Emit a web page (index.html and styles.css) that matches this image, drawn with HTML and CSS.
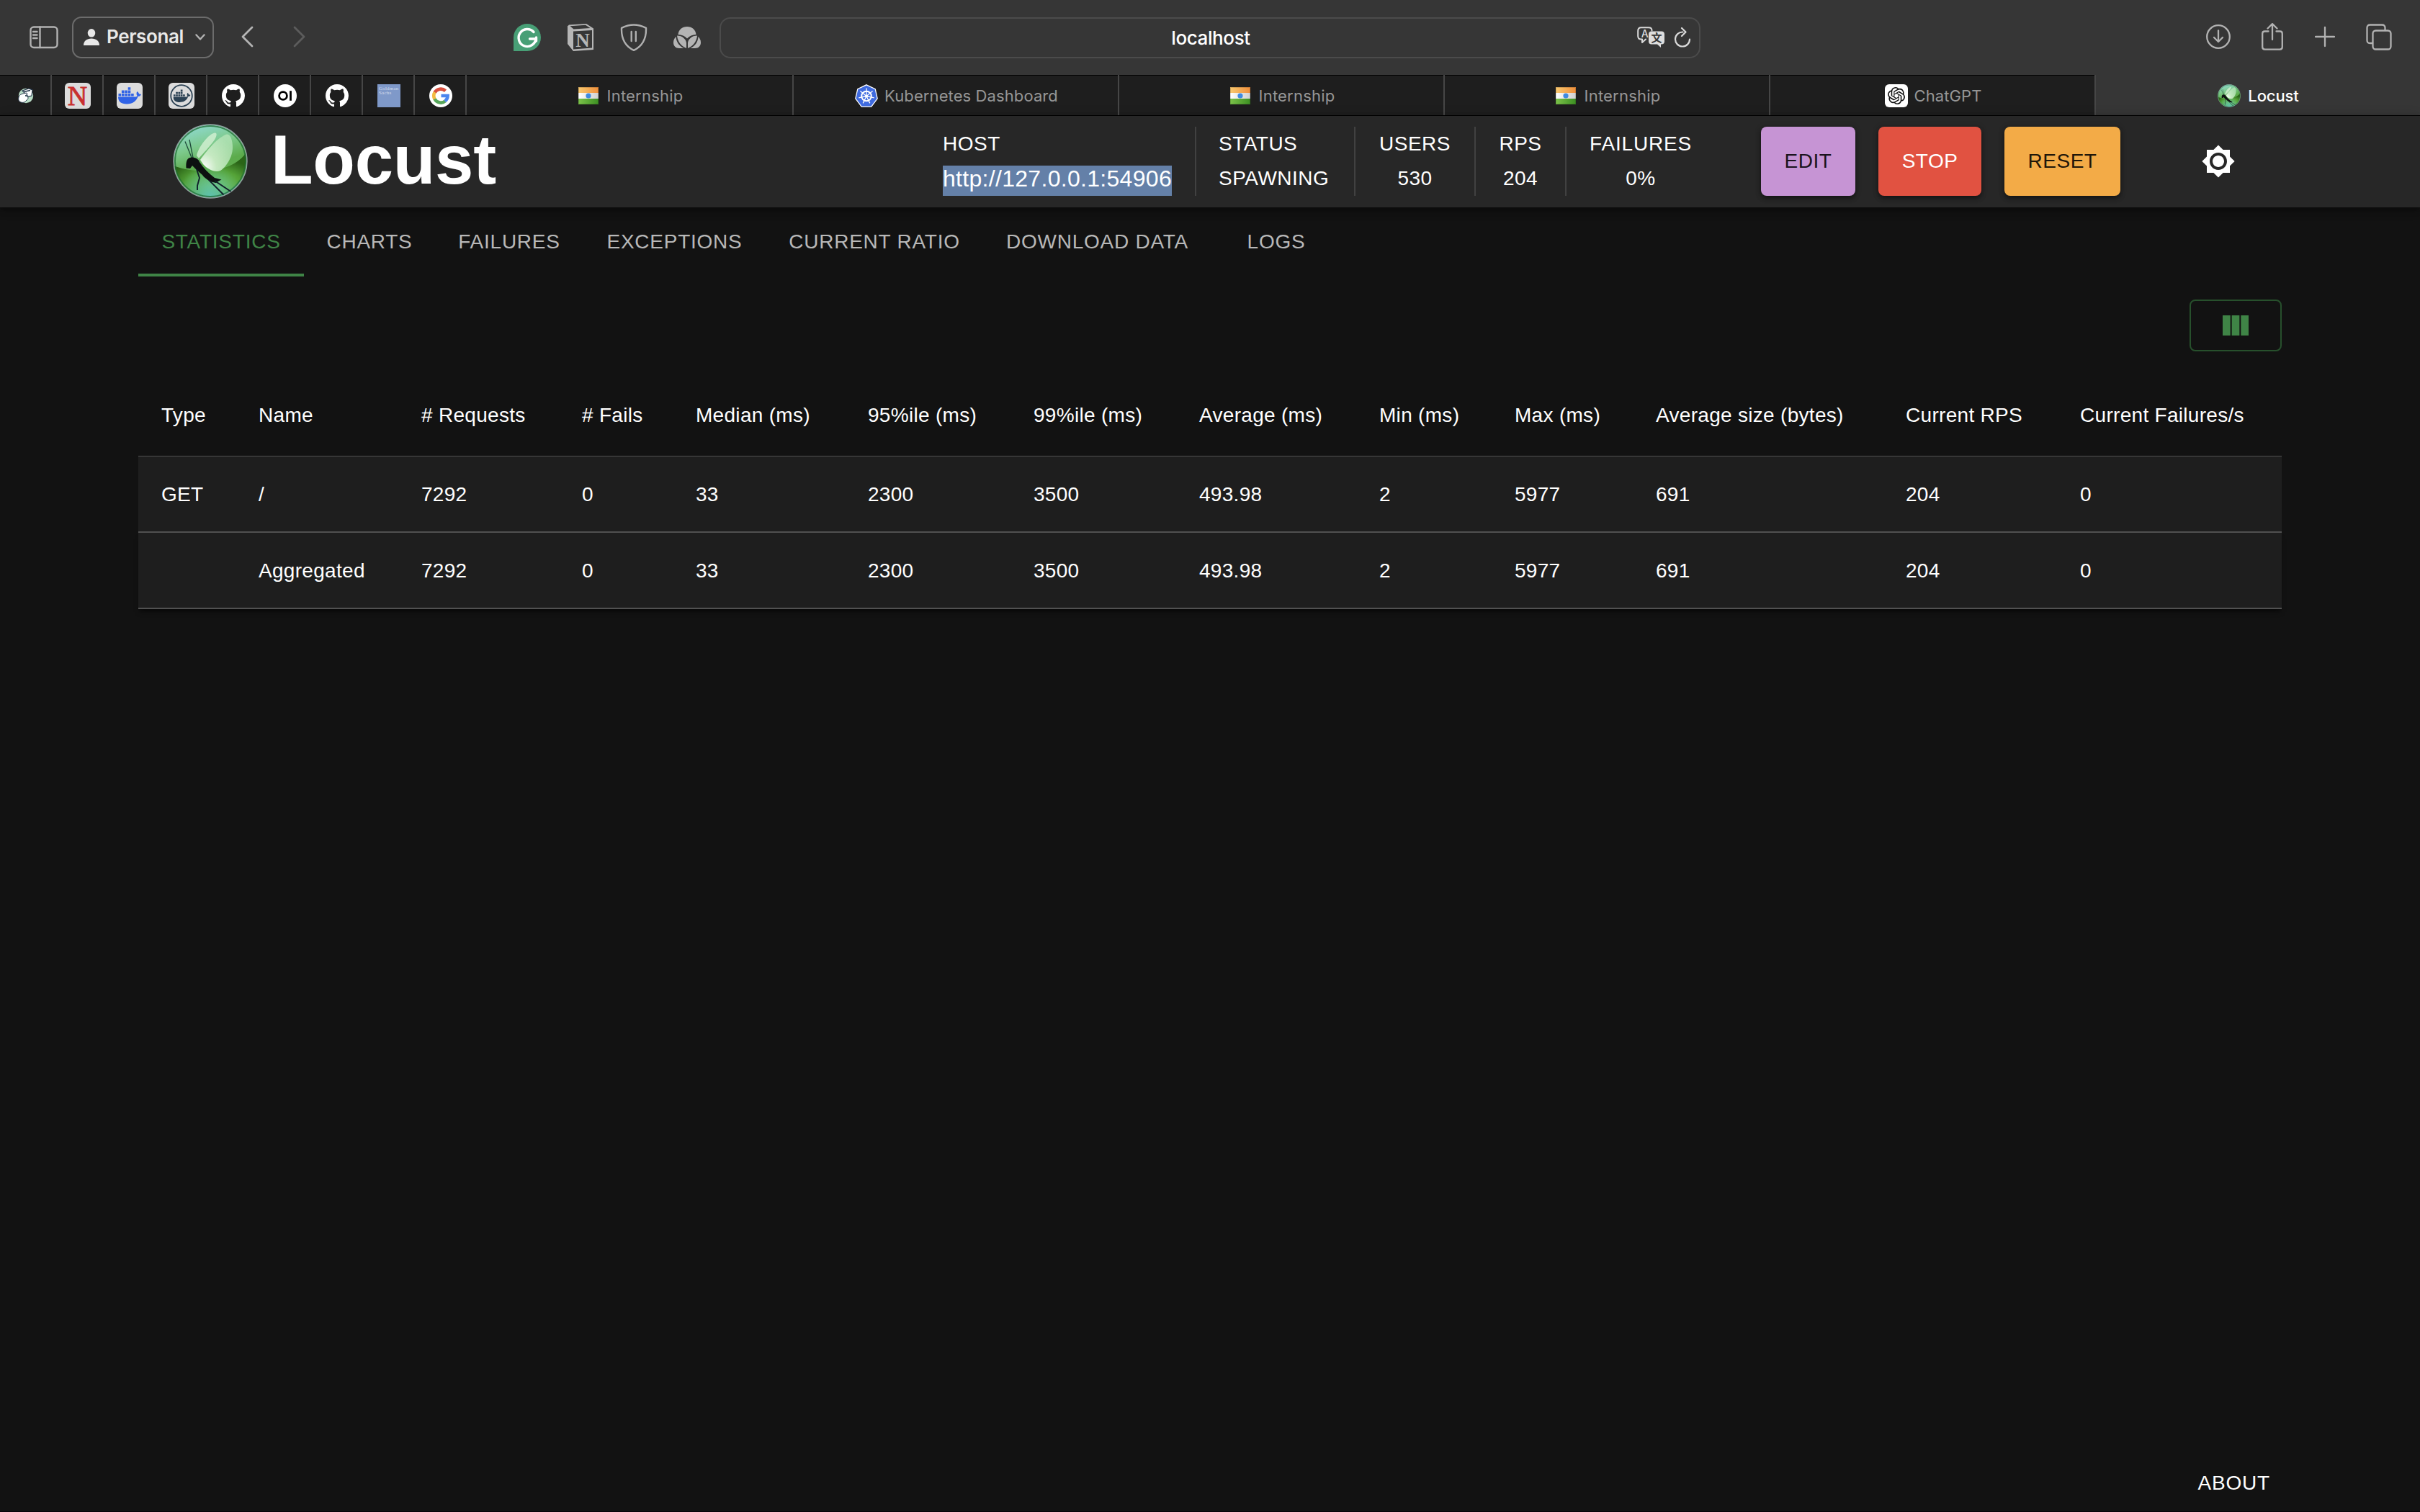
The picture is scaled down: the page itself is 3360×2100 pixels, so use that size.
FILE: index.html
```html
<!DOCTYPE html>
<html lang="en">
<head>
<meta charset="utf-8">
<title>Locust</title>
<link rel="stylesheet" href="styles.css">
</head>
<body>
<svg class="sprite" width="0" height="0" aria-hidden="true">
  <defs>
    <linearGradient id="orb" x1="0.3" y1="0" x2="0.6" y2="1">
      <stop offset="0" stop-color="#8fd9d0"/><stop offset=".3" stop-color="#7cc98a"/><stop offset=".55" stop-color="#5cab4c"/><stop offset=".8" stop-color="#5fb04f"/><stop offset="1" stop-color="#5cb79a"/>
    </linearGradient>
    <radialGradient id="shade" cx=".55" cy=".78" r=".66">
      <stop offset="0" stop-color="#7cc75c"/><stop offset=".6" stop-color="#54a237"/><stop offset="1" stop-color="#2a6417"/>
    </radialGradient>
    <radialGradient id="teal" cx=".5" cy="1" r=".45">
      <stop offset="0" stop-color="#5ec2b0"/><stop offset="1" stop-color="#5ec2b0" stop-opacity="0"/>
    </radialGradient>
    <radialGradient id="wing" cx=".1" cy=".9" r="1">
      <stop offset="0" stop-color="#fff"/><stop offset=".4" stop-color="#d0efcc" stop-opacity=".9"/><stop offset="1" stop-color="#b5e4b8" stop-opacity=".8"/>
    </radialGradient>
    <linearGradient id="saffron"><stop offset="0" stop-color="#f9c970"/><stop offset="1" stop-color="#ef8f3c"/></linearGradient>
    <linearGradient id="leaf"><stop offset="0" stop-color="#7cc24a"/><stop offset="1" stop-color="#3c8f22"/></linearGradient>
    <linearGradient id="pale"><stop offset="0" stop-color="#fff"/><stop offset="1" stop-color="#cfcfcf"/></linearGradient>
    <symbol id="locust" viewBox="0 0 104 104">
      <circle cx="52" cy="52" r="51" fill="url(#orb)"/>
      <path d="M2.5 58.7C30 69 80 70 101 41A50 50 0 1 1 2.5 58.7z" fill="url(#shade)"/>
      <circle cx="52" cy="52" r="50" fill="url(#teal)"/>
      <circle cx="52" cy="52" r="49" fill="none" stroke="#1f6b34" stroke-opacity=".75" stroke-width="1.8"/>
      <circle cx="52" cy="52" r="51" fill="none" stroke="#8fa3a0" stroke-width="1.4"/>
      <path d="M33 44C36 31 50 14 58 12.500C62 12 61 17 58 22C51 32 42 41 36 48z" fill="#d0efd0" fill-opacity=".85"/>
      <path d="M38 50C48 36 63 18 75 14.500C80 14 83 23 83 33C83 46 74 60 66 65C58 68 48 63 42 56z" fill="url(#wing)"/>
      <path d="M17 24.500L26.500 48M23 22L28 47" stroke="#1e4a3a" stroke-width="1.300" fill="none"/>
      <path d="M18.500 61.500C18 53 19 47 26 46.500C31 46.500 36 49 37 53C43 62 50 69 58 75L67.500 77.500L62.500 80L60 82C53 81 45 77 41 71L32 63L27 58L24 62z" fill="#0d1110"/>
      <path d="M33 63L37 75L34 86V92M50 78L70.500 98.500M58 79L80.500 94" stroke="#10202a" stroke-width="1.900" fill="none"/>
    </symbol>
    <symbol id="github" viewBox="0 0 16 16"><path fill="#fff" d="M8 0C3.580 0 0 3.580 0 8c0 3.540 2.290 6.530 5.470 7.590.4.070.55-.17.55-.38 0-.19-.01-.82-.01-1.490-2.010.37-2.530-.49-2.690-.94-.09-.23-.48-.94-.82-1.130-.28-.15-.68-.52-.01-.53.63-.01 1.080.58 1.230.82.72 1.210 1.870.87 2.330.66.070-.52.28-.87.51-1.070-1.780-.2-3.640-.89-3.640-3.950 0-.87.31-1.590.82-2.150-.08-.2-.36-1.020.080-2.120 0 0 .67-.21 2.200.82.64-.18 1.320-.27 2-.27s1.360.090 2 .27c1.530-1.040 2.200-.82 2.200-.82.44 1.100.16 1.920.080 2.120.51.56.82 1.270.82 2.150 0 3.070-1.870 3.750-3.650 3.950.29.25.54.73.54 1.480 0 1.070-.01 1.930-.01 2.200 0 .21.15.46.55.38A8.010 8.010 0 0 0 16 8c0-4.420-3.580-8-8-8z"/></symbol>
    <symbol id="flag" viewBox="0 0 32 32">
      <path fill="url(#saffron)" d="M2 4h28v8H2z"/><path fill="url(#pale)" d="M2 12h28v8H2z"/><path fill="url(#leaf)" d="M2 20h28v8H2z"/>
      <circle cx="16" cy="16" r="3.600" fill="#3f8ae0"/>
      <path d="M2.500 4.500h27v23h-27z" fill="none" stroke="#000" stroke-opacity=".16"/>
    </symbol>
    <symbol id="whale" viewBox="0 0 32 24">
      <path d="M0 14h24.500c1.200-.3 1.800-.8 2-1.500-1.400-2-1.200-4.300 0-6 1.600 1 2.300 2.200 2.500 3.500 1.200-.2 2.200 0 3 .5-.8 2-2.200 2.800-4.300 2.800C25 20.500 20 24 12 24 4 24 0 20.500 0 14z"/>
      <path d="M.5 9.500h3.600v3.600H.5zM4.900 9.500h3.600v3.600H4.900zM9.300 9.500h3.600v3.600H9.300zM13.700 9.500h3.600v3.600h-3.600zM18.100 9.500h3.600v3.600h-3.600zM4.900 5.100h3.600v3.600H4.900zM9.300 5.100h3.600v3.600H9.300zM13.700 5.100h3.600v3.600h-3.600zM13.700.7h3.600v3.600h-3.600z"/>
    </symbol>
  </defs>
</svg>

<header class="toolbar">
  <div class="tools-left">
    <svg class="ic-side" viewBox="0 0 40 32"><rect x="1.500" y="1.500" width="37" height="28.500" rx="4.500"/><path d="M14.500 1.500V30M5 8h5.500M5 12.500h5.500M5 17h5.500"/></svg>
    <button class="profile">
      <svg class="ic-person" viewBox="0 0 22 23"><ellipse cx="11" cy="5.800" rx="5.300" ry="5.800"/><path d="M0 23c0-6 4.500-9.500 11-9.500S22 17 22 23z"/></svg>
      <span>Personal</span>
      <svg class="ic-down" viewBox="0 0 14 9"><path d="M1.500 1.500L7 7.500l5.500-6"/></svg>
    </button>
    <svg class="ic-back" viewBox="0 0 17 30"><path d="M15 2L2 15l13 13"/></svg>
    <svg class="ic-fwd" viewBox="0 0 17 30"><path d="M2 2l13 13L2 28"/></svg>
  </div>
  <div class="extensions">
    <svg viewBox="0 0 38 38"><path fill="#489f76" d="M19 0a19 19 0 1 1 0 38H0V19A19 19 0 0 1 19 0z"/><path d="M28 11.500A12 12 0 1 0 31 21H22.500M31.500 19v5" fill="none" stroke="#fff" stroke-width="3.400" stroke-linecap="round"/></svg>
    <svg viewBox="0 0 38 38"><path fill="#b6b6b6" d="M3 1.500L27 0l10 6.500V36L9 38 1 28V3.500z"/><path fill="#363636" d="M4.500 3.200L26 1.800l6.500 4.300L9.500 7.500zM9 10.500L35 9v24.500L9 35.500z"/><text x="22" y="32" text-anchor="middle" class="notion">N</text></svg>
    <svg viewBox="0 0 38 38"><path d="M19 1.500c6 0 11.500 1.700 17 4.300.5 14-4.500 25-17 31C6.500 31 1.500 20 2 5.800 7.500 3.200 13 1.500 19 1.500zM15.700 11v13M21.800 11v13" fill="none" stroke="#b0b0b0" stroke-width="2.400" stroke-linecap="round"/></svg>
    <svg viewBox="0 0 38 38"><g fill="#b4b4b4"><path d="M6.500 15C7 8.500 12 4 19 4s12 4.500 12.500 11c-5 .2-9.500 2-12.500 5.500C16 17 11.500 15.200 6.500 15z"/><path d="M5 16.500c7.500 0 12.500 5 13 10v7.500C11 31 6 25.500 5 16.500zM33 16.500c-7.500 0-12.500 5-13 10v7.500c7-3 12-8.500 13-17.500z"/><path d="M3.500 18C4 25.500 8 31 14.500 34H8C3 34 0 30.500 0 26c0-3.500 1.500-6 3.500-8zM34.500 18c-.5 7.500-4.500 13-11 16H30c5 0 8-3.500 8-8 0-3.500-1.500-6-3.500-8z"/></g></svg>
  </div>
  <div class="urlbar">
    <span class="url">localhost</span>
    <svg class="ic-translate" viewBox="0 0 38 30"><path d="M12 17.500L7 22v-4.500H5.500C3 17.500 1.200 16 1.200 13V6C1.200 3 3 1.200 5.500 1.200h10.500C18.800 1.200 20.500 3 20.500 5.500" fill="none" stroke="#dadada" stroke-width="2"/><text x="10.800" y="14.500" text-anchor="middle" class="tr-a">A</text><path fill="#dedede" d="M20 6.500h14c2.500 0 4 1.500 4 4v10c0 2.500-1.500 4-4 4h-1V29l-5-4.500h-8c-2.500 0-4-1.500-4-4v-10c0-2.500 1.500-4 4-4z"/><text x="27" y="21" text-anchor="middle" class="tr-b">文</text></svg>
    <svg class="ic-reload" viewBox="0 0 24 28"><path d="M12.500 6.500A10 10 0 1 0 22 16.500M11 1l5.500 5.500L11 12" fill="none" stroke="#dadada" stroke-width="2.200" stroke-linecap="round" stroke-linejoin="round"/></svg>
  </div>
  <div class="tools-right">
    <svg viewBox="0 0 34 38"><circle cx="17" cy="19" r="15.800"/><path d="M17 10.500v15M11 20l6 6 6-6"/></svg>
    <svg viewBox="0 0 30 38"><path d="M9.500 11.500H4.500c-2 0-3.300 1.300-3.300 3.300v18.500c0 2 1.300 3.300 3.300 3.300h21c2 0 3.300-1.300 3.300-3.300V14.800c0-2-1.300-3.300-3.300-3.300h-5M15 23V1.500M8.500 7.500L15 1.200l6.500 6.300"/></svg>
    <svg viewBox="0 0 28 38"><path d="M14 6v26M1 19h26"/></svg>
    <svg viewBox="0 0 36 38"><rect x="9.500" y="10.500" width="25" height="26" rx="4"/><path d="M26.500 10V6.500c0-2.500-1.500-4-4-4h-17c-2.500 0-4 1.500-4 4v17.500c0 2.500 1.500 4 4 4H9"/></svg>
  </div>
</header>

<nav class="tabstrip">
  <div class="tab"><svg width="22" height="22" viewBox="0 0 22 22"><circle cx="11" cy="11" r="10.200" fill="#b9dcc6"/><path d="M6 4l9-3 5 2-1 8-5 1z" fill="#fff" stroke="#24364a" stroke-width="1.200"/><path d="M1 13c1-4 5-5 11-6l1 2-3 2c5 1 5 4 2 6-2 3-5 4-8 3s-4-4-3-7z" fill="#fff" stroke="#24364a" stroke-width="1"/><path d="M8 5.500l9-2" stroke="#24364a" stroke-width="1.500"/></svg></div>
  <div class="tab"><span class="fav-box">N</span></div>
  <div class="tab"><svg width="36" height="36" viewBox="0 0 36 36"><rect width="36" height="36" rx="6" fill="#dcdcdc"/><use href="#whale" x="2" y="4.500" width="32" height="26" fill="#3063e6"/></svg></div>
  <div class="tab"><svg width="36" height="36" viewBox="0 0 36 36"><rect width="36" height="36" rx="6" fill="#dcdcdc"/><circle cx="18" cy="18" r="14.800" fill="none" stroke="#2c4254" stroke-width="1.800"/><use href="#whale" x="6.500" y="9" width="24" height="18" fill="#2c4254"/></svg></div>
  <div class="tab"><svg width="32" height="32"><use href="#github"/></svg></div>
  <div class="tab"><svg width="32" height="32" viewBox="0 0 32 32"><circle cx="16" cy="16" r="16" fill="#fff"/><circle cx="13" cy="16" r="5.400" fill="none" stroke="#000" stroke-width="2.800"/><path d="M23.500 9.200v13.600" stroke="#000" stroke-width="2.800"/></svg></div>
  <div class="tab"><svg width="32" height="32"><use href="#github"/></svg></div>
  <div class="tab"><svg width="32" height="32" viewBox="0 0 32 32"><rect width="32" height="32" fill="#7f99c9"/><text x="2" y="7.500" class="fav-gs">Goldman</text><text x="2" y="14" class="fav-gs">Sachs</text></svg></div>
  <div class="tab"><svg width="32" height="32" viewBox="0 0 32 32"><circle cx="16" cy="16" r="16" fill="#fff"/><g fill="none" stroke-width="4.600"><path d="M22.500 9.200A9.700 9.700 0 0 0 7.500 11.500" stroke="#d9503f"/><path d="M7.600 11.200a9.700 9.700 0 0 0 0 9.600" stroke="#f3bb42"/><path d="M7.500 20.500a9.700 9.700 0 0 0 14.500 3" stroke="#57a65b"/><path d="M21.800 23.500A9.700 9.700 0 0 0 25.600 16H16.500" stroke="#4c86ee"/></g></svg></div>
  <div class="tab"><svg width="32" height="32"><use href="#flag"/></svg><span>Internship</span></div>
  <div class="tab wide"><svg width="32" height="32" viewBox="0 0 32 32"><path d="M16 .8l12.200 5.900 3 13.200-8.400 11.300H9.200L.8 19.900l3-13.200z" fill="#3f6be0" stroke="#fff" stroke-width="1.300"/><g fill="none" stroke="#fff"><circle cx="16" cy="16.500" r="6.800" stroke-width="2"/><path stroke-width="1.300" d="M16 5.500v11M24.600 9.600L16 16.500M26.700 18.900L16 16.500M20.800 26.400L16 16.500M11.200 26.400L16 16.500M5.300 18.900L16 16.500M7.400 9.600L16 16.500"/></g><circle cx="16" cy="16.500" r="1.800" fill="#fff"/></svg><span>Kubernetes Dashboard</span></div>
  <div class="tab"><svg width="32" height="32"><use href="#flag"/></svg><span>Internship</span></div>
  <div class="tab"><svg width="32" height="32"><use href="#flag"/></svg><span>Internship</span></div>
  <div class="tab wide"><svg width="32" height="32" viewBox="0 0 32 32"><rect width="32" height="32" rx="6" fill="#fff"/><path transform="translate(4 4)" fill="#111" d="M22.2819 9.8211a5.9847 5.9847 0 0 0-.5157-4.9108 6.0462 6.0462 0 0 0-6.5098-2.9A6.0651 6.0651 0 0 0 4.9807 4.1818a5.9847 5.9847 0 0 0-3.9977 2.9 6.0462 6.0462 0 0 0 .7427 7.0966 5.98 5.98 0 0 0 .511 4.9107 6.051 6.051 0 0 0 6.5146 2.9001A5.9847 5.9847 0 0 0 13.2599 24a6.0557 6.0557 0 0 0 5.7718-4.2058 5.9894 5.9894 0 0 0 3.9977-2.9001 6.0557 6.0557 0 0 0-.7475-7.0729zm-9.022 12.6081a4.4755 4.4755 0 0 1-2.8764-1.0408l.1419-.0804 4.7783-2.7582a.7948.7948 0 0 0 .3927-.6813v-6.7369l2.02 1.1686a.071.071 0 0 1 .038.052v5.5826a4.504 4.504 0 0 1-4.4945 4.4944zm-9.6607-4.1254a4.4708 4.4708 0 0 1-.5346-3.0137l.142.0852 4.783 2.7582a.7712.7712 0 0 0 .7806 0l5.8428-3.3685v2.3324a.0804.0804 0 0 1-.0332.0615L9.74 19.9502a4.4992 4.4992 0 0 1-6.1408-1.6464zM2.3408 7.8956a4.485 4.485 0 0 1 2.3655-1.9728V11.6a.7664.7664 0 0 0 .3879.6765l5.8144 3.3543-2.0201 1.1685a.0757.0757 0 0 1-.071 0l-4.8303-2.7865A4.504 4.504 0 0 1 2.3408 7.872zm16.5963 3.8558L13.1038 8.364 15.1192 7.2a.0757.0757 0 0 1 .071 0l4.8303 2.7913a4.4944 4.4944 0 0 1-.6765 8.1042v-5.6772a.79.79 0 0 0-.407-.667zm2.0107-3.0231l-.142-.0852-4.7735-2.7818a.7759.7759 0 0 0-.7854 0L9.409 9.2297V6.8974a.0662.0662 0 0 1 .0284-.0615l4.8303-2.7866a4.4992 4.4992 0 0 1 6.6802 4.66zM8.3065 12.863l-2.02-1.1638a.0804.0804 0 0 1-.038-.0567V6.0742a4.4992 4.4992 0 0 1 7.3757-3.4537l-.142.0805L8.704 5.459a.7948.7948 0 0 0-.3927.6813zm1.0976-2.3654l2.602-1.4998 2.6069 1.4998v2.9994l-2.5974 1.4997-2.6067-1.4997Z"/></svg><span>ChatGPT</span></div>
  <div class="tab active"><svg width="32" height="32"><use href="#locust"/></svg><span>Locust</span></div>
</nav>

<div class="appbar">
  <div class="brand"><svg width="104" height="104"><use href="#locust"/></svg><h1>Locust</h1></div>
  <div class="stats">
    <div class="stat host"><span>HOST</span><span class="link"><mark>http://127.0.0.1:54906</mark></span></div>
    <div class="stat status"><span>STATUS</span><span>SPAWNING</span></div>
    <div class="stat users"><span>USERS</span><span>530</span></div>
    <div class="stat rps"><span>RPS</span><span>204</span></div>
    <div class="stat fails"><span>FAILURES</span><span>0%</span></div>
  </div>
  <div class="actions">
    <button class="btn edit">EDIT</button>
    <button class="btn stop">STOP</button>
    <button class="btn reset">RESET</button>
  </div>
  <svg class="theme" viewBox="0 0 24 24"><path d="M20 8.690V4h-4.690L12 .69 8.690 4H4v4.690L.69 12 4 15.310V20h4.690L12 23.310 15.310 20H20v-4.690L23.310 12 20 8.690zM12 18c-3.310 0-6-2.690-6-6s2.690-6 6-6 6 2.690 6 6-2.690 6-6 6zm0-10c-2.210 0-4 1.790-4 4s1.790 4 4 4 4-1.790 4-4-1.790-4-4-4z"/></svg>
</div>

<main>
  <div class="tabs">
    <a class="selected">STATISTICS</a><a>CHARTS</a><a>FAILURES</a><a>EXCEPTIONS</a><a>CURRENT RATIO</a><a>DOWNLOAD DATA</a><a>LOGS</a>
  </div>
  <div class="table-tools">
    <button class="columns"><svg width="48" height="48" viewBox="0 0 24 24"><path d="M14.670 5v14H9.330V5h5.340zm1 14H21V5h-5.330v14zm-7.340 0V5H3v14h5.330z"/></svg></button>
  </div>
  <div class="table">
    <div class="row head"><span>Type</span><span>Name</span><span># Requests</span><span># Fails</span><span>Median (ms)</span><span>95%ile (ms)</span><span>99%ile (ms)</span><span>Average (ms)</span><span>Min (ms)</span><span>Max (ms)</span><span>Average size (bytes)</span><span>Current RPS</span><span>Current Failures/s</span></div>
    <div class="row"><span>GET</span><span>/</span><span>7292</span><span>0</span><span>33</span><span>2300</span><span>3500</span><span>493.98</span><span>2</span><span>5977</span><span>691</span><span>204</span><span>0</span></div>
    <div class="row"><span></span><span>Aggregated</span><span>7292</span><span>0</span><span>33</span><span>2300</span><span>3500</span><span>493.98</span><span>2</span><span>5977</span><span>691</span><span>204</span><span>0</span></div>
  </div>
</main>
<footer><a>ABOUT</a></footer>
</body>
</html>
```
FILE: styles.css
```css
* { box-sizing: border-box; }
body {
  margin: 0;
  height: 2100px;
  display: flex;
  flex-direction: column;
  background: #121212;
  color: #fff;
  font-family: "Liberation Sans", Arial, sans-serif;
  font-size: 28px;
  line-height: 32px;
  overflow: hidden;
}
button { border: 0; padding: 0; margin: 0; background: none; font: inherit; color: inherit; }
svg { display: block; flex: none; }
.sprite { position: absolute; }

/* Browser toolbar */
.toolbar {
  height: 104px;
  flex: none;
  background: #363636;
  display: grid;
  grid-template-columns: 713px 286px 1362px 1fr;
  font-family: Inter, sans-serif;
}
.toolbar svg { fill: none; stroke-linecap: round; stroke-linejoin: round; }
.tools-left { display: flex; align-items: center; padding-left: 41px; }
.ic-side { width: 40px; height: 32px; stroke: #b2b2b2; stroke-width: 2.4; }
.profile {
  width: 197px;
  height: 58px;
  margin-left: 19px;
  border: 2px solid #6c6c6c;
  border-radius: 13px;
  display: flex;
  align-items: center;
  padding: 0 10px 2px 14px;
  font-size: 26px;
  font-weight: 600;
  letter-spacing: -0.4px;
  color: #e8e8e8;
}
.toolbar .ic-person { width: 22px; height: 29px; fill: #e8e8e8; margin-right: 10px; }
.ic-down { width: 14px; height: 9px; stroke: #b2b2b2; stroke-width: 2.4; margin-left: auto; }
.ic-back { width: 17px; height: 30px; margin-left: 38px; margin-top: -2px; stroke: #b4b4b4; stroke-width: 2.8; }
.ic-fwd { width: 17px; height: 30px; margin-left: 55px; margin-top: -2px; stroke: #5c5c5c; stroke-width: 2.8; }
.extensions { display: flex; gap: 36px; align-items: center; }
.extensions svg { width: 38px; height: 38px; }
.extensions .notion { font: bold 27px "Liberation Serif", serif; fill: #b6b6b6; stroke: none; }
.urlbar {
  align-self: center;
  height: 57px;
  border: 2px solid #4b4b4b;
  border-radius: 15px;
  display: grid;
  grid-template-columns: 1fr 38px 24px;
  column-gap: 13px;
  align-items: center;
  padding-right: 11px;
}
.url { padding: 1px 0 0 101px; text-align: center; font-size: 26px; font-weight: 500; letter-spacing: -0.4px; }
.ic-translate { width: 38px; height: 30px; }
.ic-reload { width: 24px; height: 28px; }
.tr-a { font: 500 14px Inter, sans-serif; fill: #dadada; }
.tr-b { font: 700 15px "Noto Sans CJK SC", sans-serif; fill: #363636; }
.tools-right { display: grid; grid-template-columns: 34px 30px 28px 36px; column-gap: 43.5px; align-items: center; justify-content: end; padding: 0 39px 3px 0; }
.tools-right svg { width: 100%; height: 38px; stroke: #b2b2b2; stroke-width: 2.3; }

/* Browser tabs */
.tabstrip {
  height: 57px;
  flex: none;
  display: grid;
  grid-template-columns: 70px repeat(8, 72px) 454px repeat(5, 452px);
  border-bottom: 1px solid #000;
  font: 400 22px/30px Inter, sans-serif;
  color: #969696;
  background: #1e1e1e;
}
.tab { display: flex; align-items: center; justify-content: center; gap: 10px; border-left: 2px solid #464646; box-shadow: inset 0 1px #000; padding: 2px 0 0 1px; letter-spacing: 0.2px; }
.tab:first-child { border-left: 0; }
.tab.wide { gap: 9px; padding-left: 2px; letter-spacing: 0.1px; }
.tab.active { background: #363636; color: #fff; box-shadow: none; font-weight: 500; letter-spacing: -0.1px; }
.fav-box { width: 36px; height: 36px; border-radius: 6px; background: #dcdcdc; color: #c8302f; font: 38px/36px "Liberation Serif", serif; letter-spacing: 0; display: grid; place-items: center; -webkit-text-stroke: 0.8px #c8302f; }
.fav-gs { font: 7px "Liberation Serif", serif; fill: #d3dcec; }

/* Application header */
.appbar {
  height: 127px;
  flex: none;
  display: flex;
  align-items: center;
  padding: 0 256px 1px 240px;
  background: #272727;
  box-shadow: 0 4px 8px rgba(0, 0, 0, .32), 0 2px 16px rgba(0, 0, 0, .2);
  z-index: 1;
}
.brand { display: flex; align-items: center; gap: 32px; width: 1069px; }
.brand h1 { margin: 0; font-size: 96px; line-height: 96px; letter-spacing: -0.3px; padding-bottom: 4px; }
.stats { display: flex; height: 96px; }
.stat { box-sizing: content-box; display: flex; flex-direction: column; align-items: center; padding: 0 32px; border-left: 2px solid #414141; white-space: nowrap; }
.stat span { height: 48px; line-height: 48px; letter-spacing: 0.5px; }
.stat.host { padding-left: 0; border-left: 0; width: 318px; align-items: flex-start; }
.stat.host .link { font-size: 32px; letter-spacing: 0.3px; display: flex; align-items: flex-end; }
.stat mark { color: #fff; background: #6480a8; height: 42px; line-height: 36px; width: 318px; }
.stat.status { width: 156px; padding: 0 32px 0 31px; align-items: flex-start; }
.users { width: 101px; }
.rps { width: 60px; }
.fails { width: 142px; }
.fails span:first-child { letter-spacing: 0.8px; }
.actions { display: flex; gap: 32px; margin-left: 64px; }
.btn { height: 96px; border-radius: 8px; letter-spacing: 0.5px; box-shadow: 0 4px 6px rgba(0, 0, 0, .35), 0 1px 8px rgba(0, 0, 0, .25); }
.edit { width: 131px; background: #c694d4; color: #1a131c; }
.stop { width: 143px; background: #e15241; }
.reset { width: 161px; background: #f3ab47; color: #1f1609; }
.theme { width: 48px; height: 48px; margin-left: auto; fill: #fff; }

/* Page content */
main { width: 2976px; margin: 0 auto; flex: 1; }
.tabs { display: grid; grid-template-columns: 230px 182px 206px 253px 302px 317px 180px; height: 96px; }
.tabs a { display: flex; align-items: center; justify-content: center; color: #b8b8b8; letter-spacing: 0.75px; white-space: nowrap; border-bottom: 4px solid transparent; padding-top: 3px; }
.tabs a.selected { color: #3f8446; border-bottom-color: #3f8446; }
.table-tools { display: flex; justify-content: flex-end; padding-top: 32px; }
.columns { width: 128px; height: 72px; border: 2px solid #27502c; border-radius: 8px; display: grid; place-items: center; }
.columns svg { fill: #3f8446; }
.table { margin-top: 32px; }
.row {
  display: grid;
  grid-template-columns: 135px 226px 223px 158px 239px 230px 230px 250px 188px 196px 347px 242px 312px;
  height: 106px;
  align-items: center;
  background: #1e1e1e;
  border-bottom: 2px solid #515151;
  letter-spacing: 0.3px;
}
.row span { padding: 2px 0 0 32px; white-space: nowrap; }
.row.head { height: 114px; background: none; border-bottom-width: 1px; }
.row.head span { padding-top: 0; }
.row:last-child { box-shadow: 0 6px 6px -2px rgba(0, 0, 0, .5); }
footer { height: 56px; display: flex; justify-content: flex-end; padding-right: 208px; letter-spacing: 0.8px; border-bottom: 1px solid #080308; }
```
